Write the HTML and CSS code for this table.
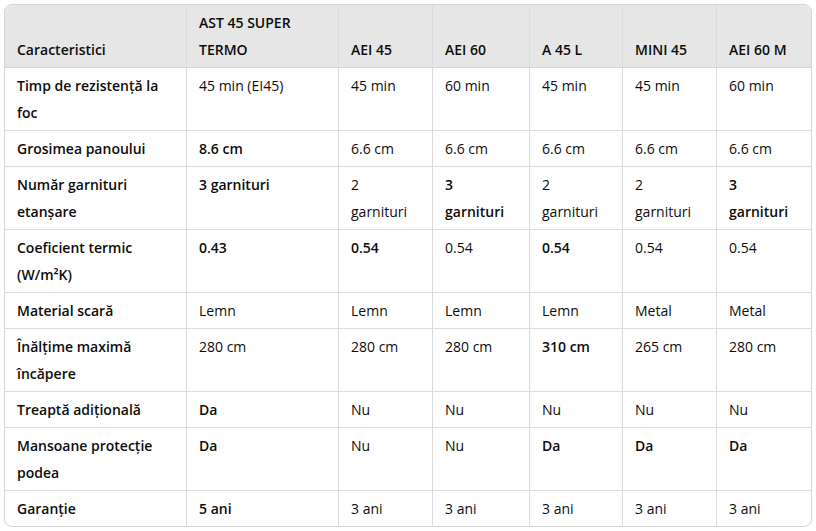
FILE: index.html
```html
<!DOCTYPE html>
<html lang="ro">
<head>
<meta charset="utf-8">
<title>Comparație scări</title>
<link rel="stylesheet" href="styles.css">
</head>
<body>
<div class="table-wrap">
<table class="cmp">
<colgroup>
<col class="c1"><col class="c2"><col class="c3"><col class="c4"><col class="c5"><col class="c6"><col class="c7">
</colgroup>
<thead>
<tr><th>Caracteristici</th><th>AST 45 SUPER TERMO</th><th>AEI 45</th><th>AEI 60</th><th>A 45 L</th><th>MINI 45</th><th>AEI 60 M</th></tr>
</thead>
<tbody>
<tr><td>Timp de rezistență la foc</td><td>45 min (EI45)</td><td>45 min</td><td>60 min</td><td>45 min</td><td>45 min</td><td>60 min</td></tr>
<tr><td>Grosimea panoului</td><td><b>8.6 cm</b></td><td>6.6 cm</td><td>6.6 cm</td><td>6.6 cm</td><td>6.6 cm</td><td>6.6 cm</td></tr>
<tr><td>Număr garnituri etanșare</td><td><b>3 garnituri</b></td><td>2 garnituri</td><td><b>3 garnituri</b></td><td>2 garnituri</td><td>2 garnituri</td><td><b>3 garnituri</b></td></tr>
<tr><td>Coeficient termic (W/m²K)</td><td><b>0.43</b></td><td><b>0.54</b></td><td>0.54</td><td><b>0.54</b></td><td>0.54</td><td>0.54</td></tr>
<tr><td>Material scară</td><td>Lemn</td><td>Lemn</td><td>Lemn</td><td>Lemn</td><td>Metal</td><td>Metal</td></tr>
<tr><td>Înălțime maximă încăpere</td><td>280 cm</td><td>280 cm</td><td>280 cm</td><td><b>310 cm</b></td><td>265 cm</td><td>280 cm</td></tr>
<tr><td>Treaptă adițională</td><td><b>Da</b></td><td>Nu</td><td>Nu</td><td>Nu</td><td>Nu</td><td>Nu</td></tr>
<tr><td>Mansoane protecție podea</td><td><b>Da</b></td><td>Nu</td><td>Nu</td><td><b>Da</b></td><td><b>Da</b></td><td><b>Da</b></td></tr>
<tr><td>Garanție</td><td><b>5 ani</b></td><td>3 ani</td><td>3 ani</td><td>3 ani</td><td>3 ani</td><td>3 ani</td></tr>
</tbody>
</table>
</div>
</body>
</html>
```

FILE: styles.css
```css
html, body {
  margin: 0;
  padding: 0;
  background: #ffffff;
}
body {
  padding: 4px 4px 0 4px;
  font-family: "Open Sans", "Noto Sans", "Liberation Sans", sans-serif;
  font-size: 14px;
  color: #0d0d0d;
}
.table-wrap {
  border: 1px solid #d4d4d4;
  border-radius: 8px;
  overflow: hidden;
}
.cmp {
  width: 100%;
  table-layout: fixed;
  border-collapse: separate;
  border-spacing: 0;
}
.c1 { width: 182px; }
.c2 { width: 152px; }
.c3 { width: 94px; }
.c4 { width: 97px; }
.c5 { width: 93px; }
.c6 { width: 94px; }
.c7 { width: 94px; }
.cmp th,
.cmp td {
  text-align: left;
  padding: 4px 16px 4px 12px;
  line-height: 27px;
  border-right: 1px solid #dcdcdc;
  border-bottom: 1px solid #dcdcdc;
  vertical-align: top;
  overflow-wrap: break-word;
}
.cmp th {
  background: #e6e6e6;
  font-weight: 600;
  vertical-align: bottom;
  border-bottom-color: #d4d4d4;
}
.cmp td:first-child {
  font-weight: 600;
}
.cmp tr > :last-child {
  border-right: none;
}
.cmp tbody tr:last-child td {
  border-bottom: none;
}
.cmp b {
  font-weight: 600;
}
```
